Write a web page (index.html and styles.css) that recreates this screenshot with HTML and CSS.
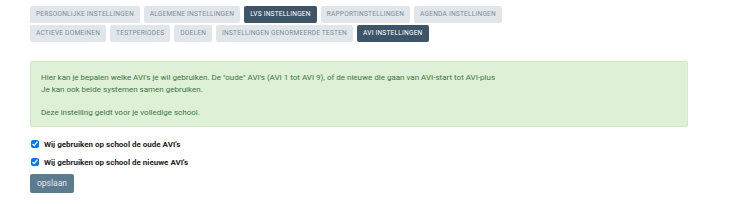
FILE: index.html
```html
<!DOCTYPE html>
<html lang="nl">
<head>
    <meta charset="UTF-8">
    <meta name="viewport" content="width=device-width, initial-scale=1.0">
    <title>AVI instellingen</title>
    <link rel="stylesheet" href="styles.css">
</head>
<body>
    <div class="page">
        <nav class="tabs">
            <a href="#" class="tab">Persoonlijke instellingen</a>
            <a href="#" class="tab">Algemene instellingen</a>
            <a href="#" class="tab active">LVS instellingen</a>
            <a href="#" class="tab">Rapportinstellingen</a>
            <a href="#" class="tab">Agenda instellingen</a>
            <a href="#" class="tab">Actieve domeinen</a>
            <a href="#" class="tab">Testperiodes</a>
            <a href="#" class="tab">Doelen</a>
            <a href="#" class="tab">Instellingen genormeerde testen</a>
            <a href="#" class="tab active">AVI instellingen</a>
        </nav>

        <div class="alert">
            Hier kan je bepalen welke AVI's je wil gebruiken. De "oude" AVI's (AVI 1 tot AVI 9), of de nieuwe die gaan van AVI-start tot AVI-plus<br>
            Je kan ook beide systemen samen gebruiken.<br>
            <br>
            Deze instelling geldt voor je volledige school.
        </div>

        <form class="avi-form">
            <label class="check">
                <input type="checkbox" checked>
                <span>Wij gebruiken op school de oude AVI's</span>
            </label>
            <label class="check">
                <input type="checkbox" checked>
                <span>Wij gebruiken op school de nieuwe AVI's</span>
            </label>
            <button type="submit" class="btn">opslaan</button>
        </form>
    </div>
</body>
</html>
```

FILE: styles.css
```css
body {
    margin: 0;
    background-color: #ffffff;
    font-family: Roboto, 'Liberation Sans', sans-serif;
    color: #333333;
}

.page {
    padding: 6px 0 0 30px;
    width: 658px;
}

.tabs {
    display: flex;
    flex-wrap: wrap;
    gap: 2px 4px;
    max-width: 530px;
}

.tab {
    display: block;
    height: 17px;
    line-height: 17px;
    padding: 0 6px;
    background-color: #e0e6ea;
    color: #7f8e99;
    border-radius: 2px;
    font-size: 6.6px;
    text-transform: uppercase;
    letter-spacing: 0.2px;
    text-decoration: none;
}

.tab.active {
    background-color: #3e5567;
    color: #ffffff;
}

.alert {
    margin-top: 19px;
    padding: 10px 10px 8px;
    background-color: #dff0d8;
    border: 1px solid #d6e9c6;
    border-radius: 2px;
    color: #3c763d;
    font-size: 8px;
    line-height: 11.5px;
}

.avi-form {
    margin-top: 8px;
}

.check {
    display: flex;
    align-items: center;
    height: 18px;
    font-size: 8px;
    font-weight: bold;
    color: #222222;
}

.check input {
    width: 8px;
    height: 8px;
    margin: 0 5px 0 1px;
}

.btn {
    padding: 0 7px;
    height: 19px;
    border: none;
    border-radius: 2px;
    background-color: #5d7b8f;
    color: #e3eaef;
    font-family: Roboto, 'Liberation Sans', sans-serif;
    font-size: 8.5px;
}
```
